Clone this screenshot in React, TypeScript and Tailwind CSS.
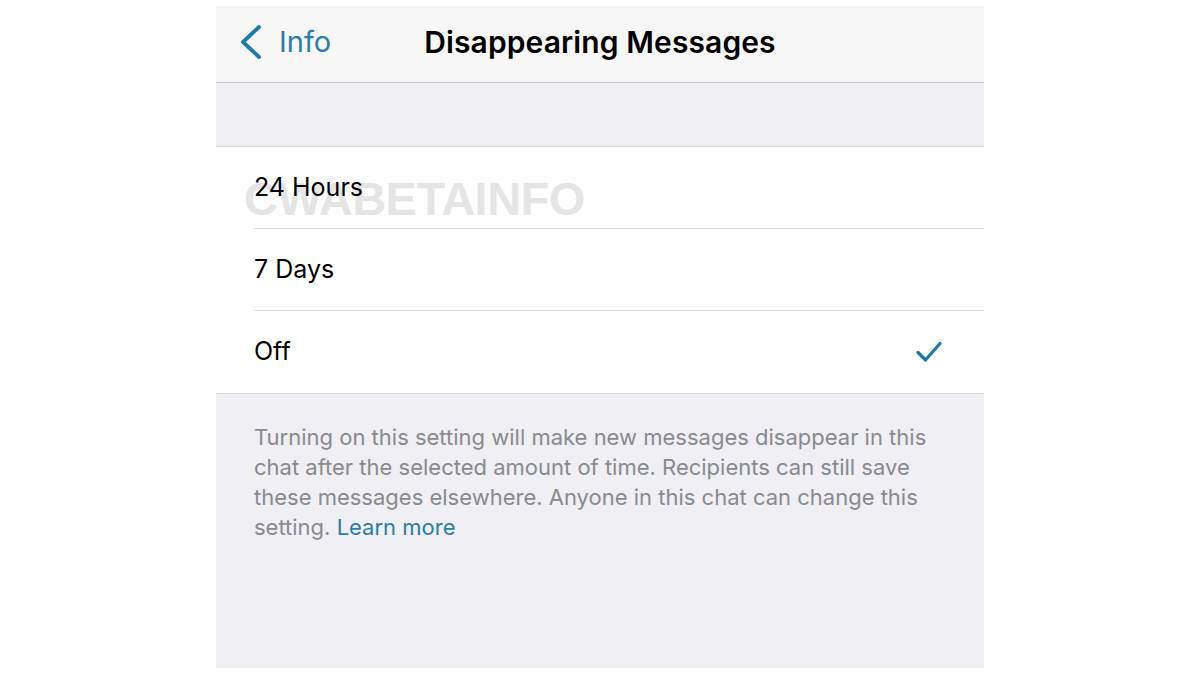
import React from "react";

function Row({ label, checked, last }: { label: string; checked?: boolean; last?: boolean }) {
  return (
    <div className="relative pl-[38px] h-[82px]">
      <div className={`h-full flex items-center pr-[42px] ${last ? "" : "border-b border-[#dcdcdf]"}`}>
        <span className="flex-1 text-[25px] text-black">{label}</span>
        {checked && (
          <svg width="26" height="22" viewBox="0 0 26 22" fill="none">
            <path d="M2 11.5 L9.5 19 L24 2.5" stroke="#1f7aa5" strokeWidth="3.2" strokeLinecap="round" strokeLinejoin="round" />
          </svg>
        )}
      </div>
    </div>
  );
}

export default function App() {
  return (
    <div className="w-[1200px] h-[675px] bg-white flex justify-center" style={{ fontFamily: "Inter, 'Liberation Sans', sans-serif" }}>
      <div className="w-[768px] mt-[6px] h-[662px] flex flex-col bg-[#efeff4]">
        <div className="h-[77px] bg-[#f7f7f7] border-b border-[#c9c9cd] relative flex items-center justify-center">
          <div className="absolute left-[22px] top-0 h-full flex items-center gap-[15px] pb-[4px]">
            <svg width="26" height="36" viewBox="0 0 26 36" fill="none">
              <path d="M21 3 L5 18 L21 33" stroke="#1f7aa5" strokeWidth="3.8" strokeLinecap="round" strokeLinejoin="round" />
            </svg>
            <span className="text-[29px] text-[#2a7ea8]">Info</span>
          </div>
          <span className="text-[30px] font-semibold text-black tracking-[0.1px] pb-[4px]">Disappearing Messages</span>
        </div>
        <div className="h-[64px] border-b border-[#d6d6da]" />
        <div className="bg-white border-b border-[#d6d6da] relative">
          <div className="absolute left-[28px] top-[28px] text-[47px] leading-none font-bold text-[#e5e5e5] tracking-[-0.5px] pointer-events-none" style={{ fontFamily: "'Liberation Sans', sans-serif" }}>
            CWABETAINFO
          </div>
          <Row label="24 Hours" />
          <Row label="7 Days" />
          <Row label="Off" checked last />
        </div>
        <div className="pl-[38px] pr-[40px] pt-[28px] text-[22px] leading-[30px] text-[#8a8a8e]">
          Turning on this setting will make new messages disappear in this chat after the selected amount of time. Recipients can still save these messages elsewhere. Anyone in this chat can change this setting. <span className="text-[#2a7ea8]">Learn more</span>
        </div>
      </div>
    </div>
  );
}
